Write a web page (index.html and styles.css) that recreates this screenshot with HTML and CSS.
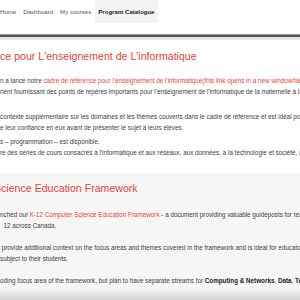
FILE: index.html
```html
<!DOCTYPE html>
<html lang="en">
<head>
    <meta charset="UTF-8">
    <meta name="viewport" content="width=device-width, initial-scale=1.0">
    <title>Program Catalogue</title>
    <link rel="stylesheet" href="styles.css">
</head>
<body>
<header class="site-header">
    <nav class="topnav">
        <a href="#">Home</a>
        <a href="#">Dashboard</a>
        <a href="#">My courses</a>
        <a href="#" class="active">Program Catalogue</a>
    </nav>
    <div class="header-rule"></div>
</header>
<main>
    <section class="block block-fr">
        <h2>ce pour L'enseignement de L'informatique</h2>
        <p class="gap-lg">n a lancé notre <a href="#">cadre de référence pour l'enseignement de l'informatique(this link opens in a new window/tab)</a>, un document<br>nent fournissant des points de repères importants pour l'enseignement de l'informatique de la maternelle à la 12e année partout au Canada.</p>
        <p class="gap-sm">contexte supplémentaire sur les domaines et les thèmes couverts dans le cadre de référence et est idéal pour les éducateurs<br>e leur confiance en eux avant de présenter le sujet à leurs élèves.</p>
        <p>s – programmation – est disponible.<br>re des séries de cours consacrés à l'informatique et aux réseaux, aux données, à la technologie et société, à la</p>
    </section>
    <section class="block block-en">
        <h2 class="shifted">Science Education Framework</h2>
        <p>nched our <a href="#">K-12 Computer Science Education Framework</a> - a document providing valuable guideposts for teaching<br>&nbsp;&nbsp;12 across Canada.</p>
        <p>&nbsp;provide additional context on the focus areas and themes covered in the framework and is ideal for educators<br>subject to their students.</p>
        <p>oding focus area of the framework, but plan to have separate streams for <strong>Computing &amp; Networks</strong>, <strong>Data</strong>, <strong>Technology &amp; Society</strong></p>
    </section>
    <div class="fade"></div>
</main>
</body>
</html>
```

FILE: styles.css
```css
body {
    margin: 0;
    font-family: "Liberation Sans", Arial, sans-serif;
    color: #404040;
    background-color: #fff;
    overflow: hidden;
}

.topnav {
    display: flex;
    height: 23px;
    font-size: 6.1px;
}

.topnav a {
    display: flex;
    align-items: center;
    padding: 0 3.5px;
    color: #555;
    text-decoration: none;
}

.topnav a:first-child {
    padding-left: 0;
}

.topnav a.active {
    background-color: #f3f3f3;
    color: #222;
    font-weight: bold;
}

.header-rule {
    margin-top: 11px;
    height: 2px;
    background-color: #555;
    border-top: 1px solid #999;
    border-bottom: 3px solid #e6e6e6;
}

.block {
    padding: 10px 0 15px;
}

.block-en {
    background-color: #f6f6f6;
    padding: 9px 0 3px;
}

.block h2 {
    margin: 0 0 13px;
    font-size: 10.6px;
    font-weight: normal;
    color: #e8443a;
}

.block-en h2 {
    margin-bottom: 15px;
}

.block h2.shifted {
    margin-left: -6px;
}

.block p {
    margin: 0 0 11px;
    font-size: 6.3px;
    line-height: 11px;
    white-space: nowrap;
}

.block p:last-child {
    margin-bottom: 0;
}

.block p.gap-lg {
    margin-bottom: 14px;
}

.block p.gap-sm {
    margin-bottom: 3px;
}

.block a {
    color: #e8443a;
    text-decoration: none;
}

.block strong {
    color: #222;
}

.fade {
    height: 16px;
    background: linear-gradient(#f6f6f6, #c4c4c4);
}
```
